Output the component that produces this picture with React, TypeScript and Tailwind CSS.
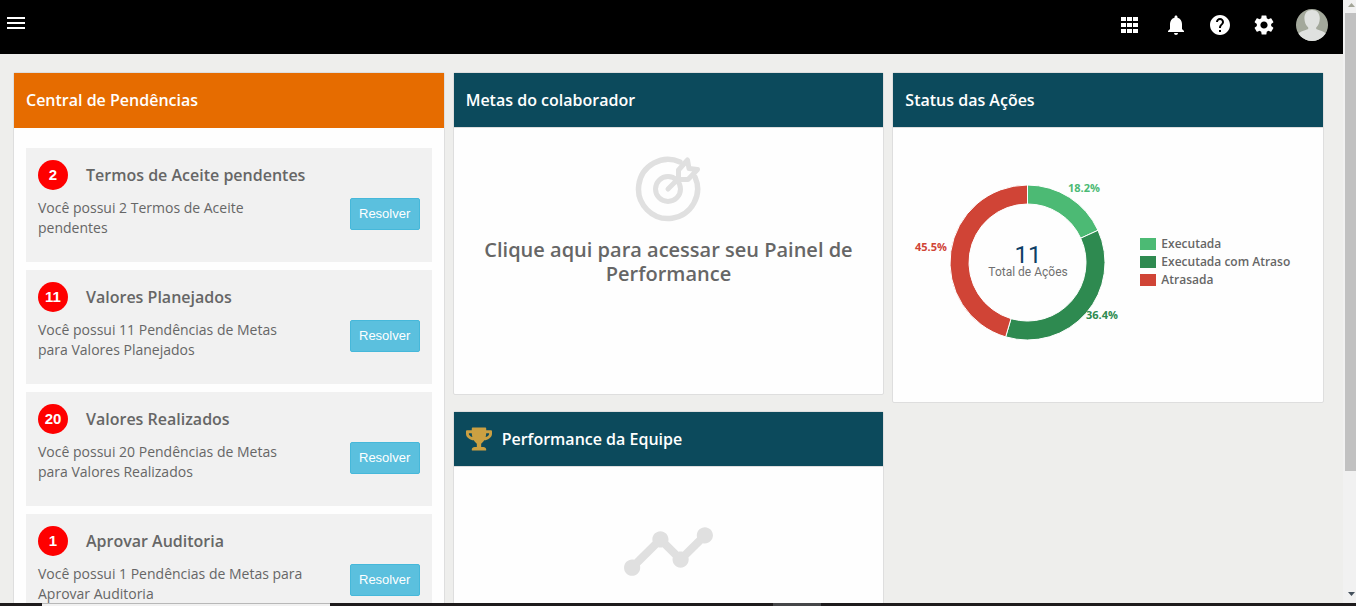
import type { ReactNode } from "react";
import { MdHelp, MdMenu, MdNotifications, MdSettings, MdTimeline } from "react-icons/md";
import { FaTrophy } from "react-icons/fa";

const pendencias = [
  { count: 2, title: "Termos de Aceite pendentes", text: "Você possui 2 Termos de Aceite pendentes" },
  { count: 11, title: "Valores Planejados", text: "Você possui 11 Pendências de Metas para Valores Planejados" },
  { count: 20, title: "Valores Realizados", text: "Você possui 20 Pendências de Metas para Valores Realizados" },
  { count: 1, title: "Aprovar Auditoria", text: "Você possui 1 Pendências de Metas para Aprovar Auditoria" },
];

const status = [
  { label: "Executada", value: 2, color: "#4cba74" },
  { label: "Executada com Atraso", value: 4, color: "#2e8a50" },
  { label: "Atrasada", value: 5, color: "#d04436" },
];

function AppsIcon() {
  return (
    <svg width="26" height="24" viewBox="0 0 26 24" fill="white" aria-hidden="true">
      {[4, 10, 16].map((y) =>
        [3, 9, 15].map((x) => <rect key={`${x}-${y}`} x={x} y={y} width="5" height="4" />)
      )}
    </svg>
  );
}

function Avatar() {
  return (
    <svg width="32" height="32" viewBox="0 0 32 32" aria-hidden="true">
      <defs>
        <clipPath id="avatar-clip">
          <circle cx="16" cy="16" r="16" />
        </clipPath>
      </defs>
      <g clipPath="url(#avatar-clip)">
        <rect width="32" height="32" fill="#a3a89b" />
        <path d="M16 1c-5 0-7.600 3.400-7.600 8.200 0 4 1.600 7.300 3.800 9.300v1.500c-3 1.600-8 2-10 5V32h28v-7c-2-3-7-3.400-10-5v-1.500c2.200-2 3.600-5.300 3.600-9.300C23.800 4.400 21 1 16 1z" fill="#dfe1df" />
      </g>
    </svg>
  );
}

function TargetIcon() {
  return (
    <svg width="66" height="66" viewBox="0 0 66 66" fill="none" stroke="#e0e0e0" strokeLinecap="round" strokeLinejoin="round" aria-hidden="true">
      <path d="M45 6A29.500 29.500 0 1 0 60 21" strokeWidth="5.500" />
      <circle cx="33" cy="33" r="12.500" strokeWidth="5" />
      <path d="M33 33L43 23" strokeWidth="5" />
      <path d="M43.500 23.500V14L52.500 4L54 12.500L62.500 13.500L53 23.500Z" strokeWidth="5" />
    </svg>
  );
}

const CX = 122.5;
const CY = 89.5;

function point(radius: number, turn: number) {
  const a = turn * 2 * Math.PI;
  return `${CX + radius * Math.sin(a)} ${CY - radius * Math.cos(a)}`;
}

function Donut() {
  const total = status.reduce((sum, s) => sum + s.value, 0);
  let start = 0;
  const slices = status.map((s) => {
    const from = start / total;
    start += s.value;
    const to = start / total;
    return (
      <path
        key={s.label}
        d={`M${point(77.5, from)}A77.5 77.5 0 0 1 ${point(77.5, to)}L${point(58.5, to)}A58.5 58.5 0 0 0 ${point(58.5, from)}Z`}
        fill={s.color}
        stroke="white"
      />
    );
  });
  return (
    <svg width="226" height="176" viewBox="0 0 226 176" className="shrink-0 overflow-visible" role="img" aria-label="Status das Ações">
      {slices}
      <g className="font-['Open_Sans',sans-serif] text-[11px] font-bold">
        <text x="179" y="19" textAnchor="middle" fill="#4cba74">18.2%</text>
        <text x="197" y="146" textAnchor="middle" fill="#2e8a50">36.4%</text>
        <text x="26" y="78" textAnchor="middle" fill="#d04436">45.5%</text>
      </g>
      <text x="123" y="90" textAnchor="middle" fill="#0d3f66" className="font-['Roboto',sans-serif] text-2xl">11</text>
      <text x="123" y="103" textAnchor="middle" fill="#707070" className="font-['Roboto',sans-serif] text-xs">Total de Ações</text>
    </svg>
  );
}

function Card({ title, icon, orange, children }: { title: string; icon?: ReactNode; orange?: boolean; children: ReactNode }) {
  return (
    <section className="rounded-xs border border-[#dedede] bg-[#fefefe]">
      <header
        className={
          orange
            ? "flex h-[55px] items-center gap-2.5 border-b border-[#e66c00] bg-[#e66c00] px-3"
            : "flex h-[55px] items-center gap-2.5 border-b border-[#dedede] bg-[#0c4a5c] px-3"
        }
      >
        {icon}
        <h2 className="text-base font-semibold text-white">{title}</h2>
      </header>
      {children}
    </section>
  );
}

export default function App() {
  return (
    <div className="flex h-screen flex-col overflow-hidden font-['Open_Sans',sans-serif] text-[#666666]">
      <div className="flex min-h-0 flex-1">
        <div className="min-w-0 flex-1 overflow-hidden bg-[#eeeeec]">
          <header className="flex h-[54px] items-start justify-between bg-black pr-[15px] pl-1 text-white">
            <button type="button" aria-label="Menu" className="mt-[11px]">
              <MdMenu size={24} />
            </button>
            <nav className="mt-[9px] flex items-center gap-5">
              <button type="button" aria-label="Aplicativos"><AppsIcon /></button>
              <button type="button" aria-label="Notificações"><MdNotifications size={24} /></button>
              <button type="button" aria-label="Ajuda"><MdHelp size={24} /></button>
              <button type="button" aria-label="Configurações"><MdSettings size={24} /></button>
              <button type="button" aria-label="Perfil"><Avatar /></button>
            </nav>
          </header>

          <main className="grid grid-cols-3 items-start gap-2 pt-[18px] pr-[19px] pl-[13px]">
            <Card title="Central de Pendências" orange>
              <ul className="flex flex-col gap-2 px-3 py-5">
                {pendencias.map((p) => (
                  <li key={p.title} className="min-h-[114px] bg-[#f1f1f1] p-3">
                    <div className="flex items-center gap-[18px]">
                      <span className="flex size-[30px] items-center justify-center rounded-full bg-[#fe0000] font-['Liberation_Sans',sans-serif] text-[15px] font-bold text-white">
                        {p.count}
                      </span>
                      <h3 className="text-base font-semibold">{p.title}</h3>
                    </div>
                    <div className="mt-2 flex items-start justify-between gap-10">
                      <p className="text-sm leading-5">{p.text}</p>
                      <button
                        type="button"
                        className="h-8 w-[70px] shrink-0 rounded-xs border border-[#46b8da] bg-[#5bc0de] font-['Liberation_Sans',sans-serif] text-[13px] text-white"
                      >
                        Resolver
                      </button>
                    </div>
                  </li>
                ))}
              </ul>
            </Card>

            <div className="flex flex-col gap-4">
              <Card title="Metas do colaborador">
                <a href="#painel" className="flex flex-col items-center gap-4 px-5 pt-7 pb-[108px] text-center text-xl leading-6 font-semibold">
                  <TargetIcon />
                  <span>Clique aqui para acessar seu Painel de Performance</span>
                </a>
              </Card>
              <Card title="Performance da Equipe" icon={<FaTrophy size={24} className="h-6 w-[26px] text-[#cba042]" />}>
                <div className="flex justify-center pt-9 pb-24">
                  <MdTimeline size={97} className="text-[#e0e0e0]" />
                </div>
              </Card>
            </div>

            <Card title="Status das Ações">
              <div className="flex items-center gap-[9px] px-3 pt-[45px] pb-[53px]">
                <Donut />
                <ul className="mt-px text-xs leading-[18px] font-semibold text-[#666666]">
                  {status.map((s) => (
                    <li key={s.label} className="flex items-center gap-[5px] whitespace-nowrap">
                      <svg width="16" height="12" aria-hidden="true">
                        <rect width="16" height="12" fill={s.color} />
                      </svg>
                      {s.label}
                    </li>
                  ))}
                </ul>
              </div>
            </Card>
          </main>
        </div>

        <div className="flex w-[13px] flex-col bg-[#f1f1f1] pl-0.5" aria-hidden="true">
          <svg width="11" height="13" viewBox="0 0 11 13" className="shrink-0">
            <path d="M3 7L6.500 3L10 7Z" fill="#a3a597" />
          </svg>
          <div className="h-[76%] bg-[#c1c1c1]" />
          <svg width="11" height="13" viewBox="0 0 11 13" className="mt-auto shrink-0">
            <path d="M3 2L6.500 6L10 2Z" fill="#44505c" />
          </svg>
        </div>
      </div>

      <div className="flex h-[3px] shrink-0 bg-[#1e1b1c]" aria-hidden="true">
        <div className="ml-[42px] w-72 border-t border-[#b8b8b8] bg-[#f1f1f1]" />
        <div className="ml-[443px] w-12 bg-[#454648]" />
      </div>
    </div>
  );
}
